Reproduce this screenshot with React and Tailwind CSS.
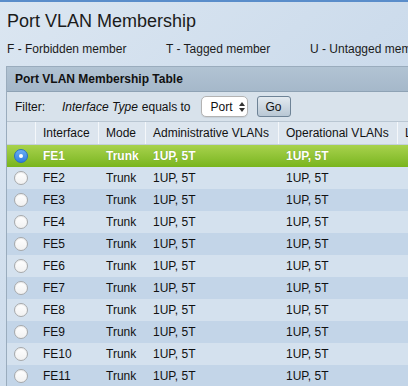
import React from "react";

const rows = Array.from({ length: 11 }, (_, i) => `FE${i + 1}`);

function Radio({ on }) {
  if (on) {
    return (
      <div className="w-[14px] h-[14px] rounded-full bg-gradient-to-b from-[#6aaef5] to-[#2f7fe0] border border-[#2a6fc4] flex items-center justify-center">
        <div className="w-[4px] h-[4px] rounded-full bg-white" />
      </div>
    );
  }
  return (
    <div className="w-[14px] h-[14px] rounded-full bg-gradient-to-b from-[#ffffff] to-[#f1f1f1] border border-[#a7a9ab] shadow-[inset_0_1px_1px_rgba(0,0,0,0.08)]" />
  );
}

export default function App() {
  return (
    <div className="w-[408px] h-[386px] overflow-hidden bg-gradient-to-br from-[#dbe6f1] via-[#cddcec] to-[#c2d3e6] border-t-2 border-[#5a8dca] font-['Liberation_Sans',Arial,sans-serif] text-[#111]">
      <div className="pl-[7px] pt-[8px] text-[18px] leading-[22px] text-[#1b1b1b] whitespace-nowrap">
        Port VLAN Membership
      </div>
      <div className="flex pl-[7px] mt-[9px] text-[12px] leading-[16px] whitespace-nowrap text-[#1b1b1b]">
        <span className="w-[159px] shrink-0">F - Forbidden member</span>
        <span className="w-[144px] shrink-0">T - Tagged member</span>
        <span className="shrink-0">U - Untagged member</span>
      </div>
      <div className="ml-[6px] mt-[9px] w-[600px] border-l border-t border-[#9aacbd]">
        <div className="h-[25px] bg-gradient-to-b from-[#b1c3d3] to-[#a5b8ca] border-b border-[#8ea2b4] flex items-center pl-[8px] text-[12px] font-bold text-[#111] whitespace-nowrap">
          Port VLAN Membership Table
        </div>
        <div className="h-[30px] bg-[#d8e2eb] border-b border-[#b9c6d2] flex items-center text-[12px] whitespace-nowrap">
          <span className="pl-[8px] w-[55px] shrink-0">Filter:</span>
          <span className="italic">Interface Type</span>
          <span className="ml-[4px]">equals to</span>
          <div className="ml-[10px] w-[47px] h-[21px] bg-white border border-[#b3b3b3] rounded-[5px] flex items-center pl-[9px] text-[12px] shadow-[0_1px_1px_rgba(0,0,0,0.08)]">
            <span>Port</span>
            <svg className="ml-[6px]" width="6" height="10" viewBox="0 0 6 10">
              <path d="M3 0 L6 4 L0 4 Z" fill="#333" />
              <path d="M0 6 L6 6 L3 10 Z" fill="#333" />
            </svg>
          </div>
          <div className="ml-[9px] w-[34px] h-[21px] rounded-[3px] border border-[#6e8396] bg-gradient-to-b from-[#e3eaf0] to-[#b8c7d4] flex items-center justify-center text-[12px]">
            Go
          </div>
        </div>
        <div className="h-[23px] bg-[#dce5ee] border-b border-[#c4d0dc] flex items-stretch text-[12px] whitespace-nowrap">
          <div className="w-[28px] shrink-0" />
          <div className="w-[63px] shrink-0 border-l border-[#f4f7fa] pl-[7px] flex items-center">Interface</div>
          <div className="w-[47px] shrink-0 border-l border-[#f4f7fa] pl-[7px] flex items-center">Mode</div>
          <div className="w-[133px] shrink-0 border-l border-[#f4f7fa] pl-[7px] flex items-center">Administrative VLANs</div>
          <div className="w-[119px] shrink-0 border-l border-[#f4f7fa] pl-[7px] flex items-center">Operational VLANs</div>
          <div className="flex-1 border-l border-[#f4f7fa] pl-[7px] flex items-center">LAG</div>
        </div>
        {rows.map((name, i) => {
          const sel = i === 0;
          const bg = sel
            ? "bg-gradient-to-b from-[#a8d24c] to-[#79b51b] text-white font-bold [text-shadow:0_0_1px_rgba(0,0,0,0.25)]"
            : i % 2 === 1
            ? "bg-[#d4e1ee]"
            : "bg-[#c3d5e8]";
          return (
            <div key={name} className={`h-[22px] flex items-stretch text-[12px] whitespace-nowrap ${bg}`}>
              <div className="w-[28px] shrink-0 flex items-center justify-center">
                <Radio on={sel} />
              </div>
              <div className="w-[63px] shrink-0 border-l border-transparent pl-[7px] flex items-center">{name}</div>
              <div className="w-[47px] shrink-0 border-l border-transparent pl-[7px] flex items-center">Trunk</div>
              <div className="w-[133px] shrink-0 border-l border-transparent pl-[7px] flex items-center">1UP, 5T</div>
              <div className="w-[119px] shrink-0 border-l border-transparent pl-[7px] flex items-center">1UP, 5T</div>
              <div className="flex-1" />
            </div>
          );
        })}
      </div>
    </div>
  );
}
